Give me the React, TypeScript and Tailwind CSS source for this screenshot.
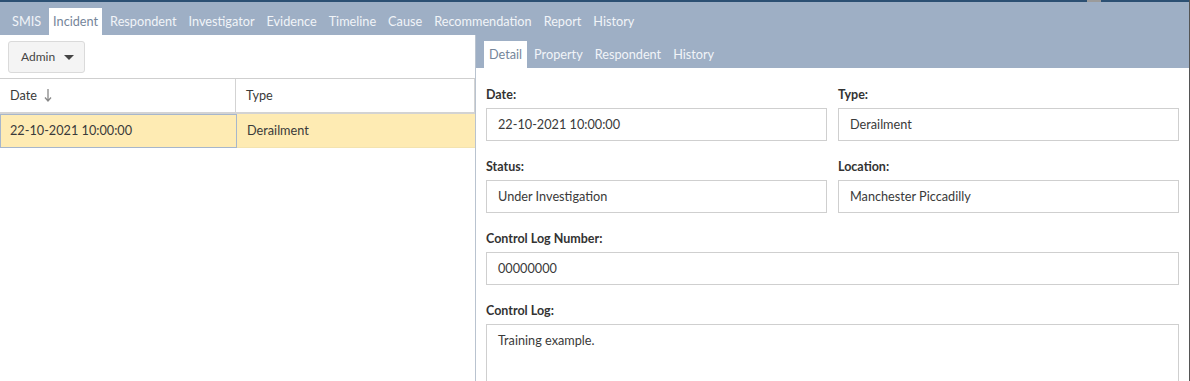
import { ReactNode } from 'react';

const MAIN_TABS = [
  'SMIS',
  'Incident',
  'Respondent',
  'Investigator',
  'Evidence',
  'Timeline',
  'Cause',
  'Recommendation',
  'Report',
  'History',
];

const SUB_TABS = ['Detail', 'Property', 'Respondent', 'History'];

function Field({ label, children }: { label: string; children: ReactNode }) {
  return (
    <div className="flex flex-col">
      <label className="mb-[7px] h-[13px] text-[12.5px] font-bold leading-[13px] text-[#333]">{label}</label>
      {children}
    </div>
  );
}

function Input({ value }: { value: string }) {
  return (
    <div className="flex h-[33px] items-center border border-[#cfcfcf] bg-white px-[11px] text-[12.7px] text-[#3a3a3a]">
      {value}
    </div>
  );
}

export default function App() {
  return (
    <div
      className="flex h-[381px] w-[1190px] flex-col overflow-hidden border-r border-[#555] bg-white"
      style={{ fontFamily: 'Lato, "Noto Sans", sans-serif' }}
    >
      <div className="relative h-[2px] shrink-0 bg-[#2c5073]">
        <div className="absolute left-[1087px] top-0 h-[2px] w-[14px] bg-[#9b9b9b]" />
      </div>

      {/* main tabs */}
      <div className="flex h-[33px] shrink-0 items-end gap-[4px] bg-[#9eafc5] pl-[8px]">
        {MAIN_TABS.map((tab) => (
          <div
            key={tab}
            className={`flex h-[27px] items-center px-[4px] text-[12.7px] ${
              tab === 'Incident' ? 'bg-white text-[#75859a]' : 'text-[#f1f4f8]'
            }`}
          >
            {tab}
          </div>
        ))}
      </div>

      <div className="flex min-h-0 flex-1">
        {/* left panel */}
        <div className="flex w-[476px] shrink-0 flex-col border-r border-[#b9c3cf]">
          <div className="h-[44px] border-b border-[#cfcfcf] pl-[8px] pt-[6px]">
            <button
              type="button"
              className="flex h-[32px] w-[77px] items-center gap-[9px] rounded-[3px] border border-[#dadada] bg-[#f4f4f4] pl-[12px] text-[12px] text-[#444]"
            >
              Admin
              <span className="h-0 w-0 border-x-[5px] border-t-[5px] border-x-transparent border-t-[#444]" />
            </button>
          </div>

          <div className="flex h-[35px] border-b-2 border-r border-[#d3d3d3] text-[12.7px] text-[#3a3a3a]">
            <div className="flex w-[236px] items-center gap-[7px] border-r border-[#d3d3d3] pl-[10px]">
              Date
              <svg width="8" height="13" viewBox="0 0 8 13" className="text-[#888]">
                <path d="M4 0 V11.5 M1 8.5 L4 12 L7 8.5" fill="none" stroke="currentColor" strokeWidth="1.3" />
              </svg>
            </div>
            <div className="flex items-center pl-[10px]">Type</div>
          </div>

          <div className="flex h-[34px] bg-[#feebb3] text-[12.7px] text-[#3a3a3a]">
            <div className="flex w-[237px] items-center border border-[#a6b6cc] pl-[9px]">22-10-2021 10:00:00</div>
            <div className="flex flex-1 items-center border-b border-[#f3e3b0] pl-[10px]">Derailment</div>
          </div>
        </div>

        {/* right panel */}
        <div className="flex min-w-0 flex-1 flex-col">
          <div className="flex h-[33px] shrink-0 items-end gap-[2px] bg-[#9eafc5] pl-[8px]">
            {SUB_TABS.map((tab) => (
              <div
                key={tab}
                className={`flex h-[27px] items-center px-[5px] text-[12.7px] ${
                  tab === 'Detail' ? 'bg-white text-[#75859a]' : 'text-[#f1f4f8]'
                }`}
              >
                {tab}
              </div>
            ))}
          </div>

          <div className="flex flex-col gap-[19px] px-[10px] pt-[20px]">
            <div className="grid grid-cols-2 gap-x-[11px] gap-y-[19px]">
              <Field label="Date:">
                <Input value="22-10-2021 10:00:00" />
              </Field>
              <Field label="Type:">
                <Input value="Derailment" />
              </Field>
              <Field label="Status:">
                <Input value="Under Investigation" />
              </Field>
              <Field label="Location:">
                <Input value="Manchester Piccadilly" />
              </Field>
            </div>
            <Field label="Control Log Number:">
              <Input value="00000000" />
            </Field>
            <Field label="Control Log:">
              <div className="h-[80px] border border-[#cfcfcf] px-[11px] pt-[6px] text-[12.7px] text-[#3a3a3a]">
                Training example.
              </div>
            </Field>
          </div>
        </div>
      </div>
    </div>
  );
}
